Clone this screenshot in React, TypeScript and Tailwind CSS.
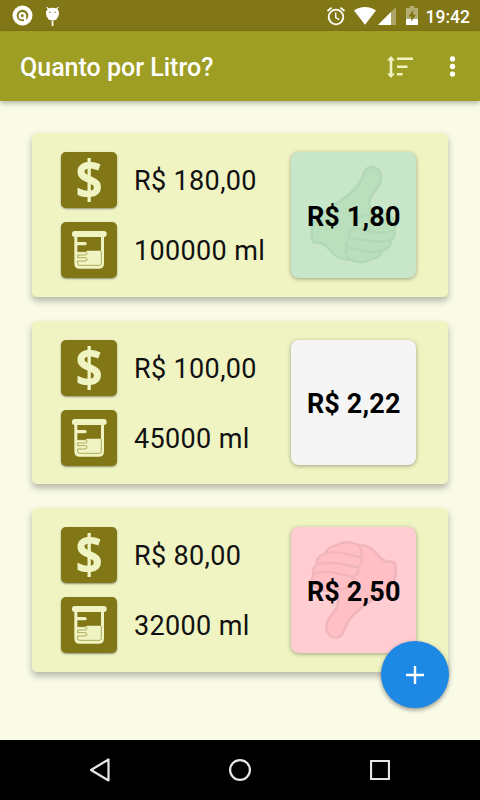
type Rating = 'best' | 'neutral' | 'worst';

interface Item {
    price: string;
    volume: string;
    perLiter: string;
    rating: Rating;
}

const items: Item[] = [
    { price: 'R$ 180,00', volume: '100000 ml', perLiter: 'R$ 1,80', rating: 'best' },
    { price: 'R$ 100,00', volume: '45000 ml', perLiter: 'R$ 2,22', rating: 'neutral' },
    { price: 'R$ 80,00', volume: '32000 ml', perLiter: 'R$ 2,50', rating: 'worst' },
];

const tileColors: Record<Rating, string> = {
    best: 'bg-[#c8e6c9]',
    neutral: 'bg-[#f5f5f5]',
    worst: 'bg-[#ffcdd2]',
};

function StatusBar() {
    return (
        <div className="flex h-[31px] shrink-0 items-center bg-[#827717] pl-3 pr-2.5 text-white">
            <svg className="h-[21px] w-[21px]" viewBox="0 0 21 21" fill="none">
                <circle cx="10.5" cy="10.5" r="10" fill="currentColor" />
                <circle cx="10.5" cy="10.5" r="5.8" fill="#827717" />
                <circle cx="10.3" cy="10.8" r="2.6" stroke="currentColor" strokeWidth="2.3" />
                <path d="M13.1 10v8" stroke="currentColor" strokeWidth="2.2" />
            </svg>
            <svg className="ml-3 h-5 w-[15px]" viewBox="0 0 15 20" fill="currentColor">
                <path d="M1.6 1.1l2 2.1M13.4 1.1l-2 2.1" stroke="currentColor" strokeWidth="1.1" />
                <path d="M3.2 2.6Q7.5.8 11.8 2.6L13.8 5.3 13.9 8 13.3 10.2 11.4 13.4Q7.5 15.6 3.6 13.4L1.7 10.2 1.1 8 1.2 5.3Z" />
                <path d="M6.7 15h1.7v5H6.7z" />
                <circle cx="4.9" cy="6.3" r=".7" fill="#827717" />
                <circle cx="10.1" cy="6.3" r=".7" fill="#827717" />
            </svg>

            <div className="ml-auto flex items-center">
                <svg className="h-5 w-[19px]" viewBox="0 0 19 20" fill="none" stroke="currentColor" strokeWidth="1.8">
                    <circle cx="9" cy="11" r="7.3" />
                    <path d="M.5 5l4-3.400M17.5 5l-4-3.400" />
                    <path d="M8.700 6.500v5l3.600 2.200" strokeWidth="1.4" />
                </svg>
                <svg className="ml-2 h-[18px] w-[22px]" viewBox="0 0 22 18" fill="currentColor">
                    <path d="M0 3.6Q4.5 0 11 0t11 3.6L11 17.7z" />
                </svg>
                <svg className="ml-0.5 h-[18px] w-[18px]" viewBox="0 0 18 18" fill="currentColor">
                    <path d="M0 18L18 0v18z" opacity=".35" />
                    <path d="M0 18L13 5v13z" />
                </svg>
                <svg className="ml-2.5 h-[19px] w-3" viewBox="0 0 12 19" fill="currentColor">
                    <path d="M0 2h3.7V0h4.6v2H12v10.8H0z" opacity=".4" />
                    <path d="M0 12.8h12V19H0z" />
                    <path d="M7.2 3.8L2.4 10.5h2.8v5l4.8-6.8H7.2z" fill="#827717" />
                </svg>
                <span className="ml-2 pt-0.5 text-[17.5px] leading-5 font-medium">19:42</span>
            </div>
        </div>
    );
}

function AppBar() {
    return (
        <header className="relative flex h-[70px] shrink-0 items-center bg-[#9e9d24] pl-5 pr-6 pt-0.5 text-white shadow-[0_2px_5px_rgba(0,0,0,0.3)]">
            <h1 className="pt-px text-[25px] leading-8 font-medium">Quanto por Litro?</h1>
            <button className="ml-auto text-[#f0f4c3]" aria-label="Ordenar">
                <svg className="h-[22px] w-[26px]" viewBox="0 0 26 22" fill="currentColor">
                    <path d="M4 0l4 4.5H5.3v13H8L4 22l-4-4.5h2.7v-13H0z" />
                    <path d="M10 1.5h16V4H10zM10 9.500h10.5V12H10zM10 17h5.5v2.500H10z" />
                </svg>
            </button>
            <button className="ml-[37px]" aria-label="Mais opções">
                <svg className="h-[22px] w-1.5" viewBox="0 0 6 22" fill="currentColor">
                    <circle cx="2.500" cy="2.9" r="2.7" />
                    <circle cx="2.500" cy="10.5" r="2.7" />
                    <circle cx="2.500" cy="18.1" r="2.7" />
                </svg>
            </button>
        </header>
    );
}

function BeakerIcon() {
    return (
        <svg className="h-14 w-14" viewBox="0 0 168 168" fill="none">
            <rect x="33" y="27" width="104" height="18" rx="8" fill="#f0f4c3" />
            <path d="M44.5 40v84q0 12 12 12h56q12 0 12-12V40" stroke="#f0f4c3" strokeWidth="9" />
            <path d="M47 89h26q3-3 7-3h42v44q0 4-4 4H52q-5 0-5-5z" fill="#f0f4c3" />
            <path d="M47 60h25a5 5 0 0 1 0 10H47z" fill="#f0f4c3" />
            <path
                d="M121 87v37q0 6-6 6H56q-6 0-6-6v-7h22q6 0 6-5t-6-5H50v-8h22q6 0 6-5t-6-5H50"
                stroke="#827717"
                strokeOpacity=".75"
                strokeWidth="2.4"
            />
        </svg>
    );
}

function IconTile({ children }: { children: React.ReactNode }) {
    return (
        <div className="flex h-[56px] w-[56px] shrink-0 items-center justify-center rounded-[5px] bg-[#827717] text-[#f0f4c3] shadow-[0_1px_2px_rgba(0,0,0,0.4)]">
            {children}
        </div>
    );
}

// The thumbs-down is a half turn of the thumbs-up
function ThumbIcon({ down }: { down?: boolean }) {
    return (
        <svg
            className={`absolute inset-0 h-full w-full ${down ? 'rotate-180' : ''}`}
            viewBox="0 0 376 376"
            fill={down ? '#ffbfc5' : '#b9dfbd'}
            stroke={down ? '#f0b6bc' : '#b3d8b7'}
            strokeWidth="7.5"
            strokeLinejoin="round"
            strokeLinecap="round"
        >
            <path d="M64 265C55 220 72 197 107 173L147 147C168 133 185 118 198 102C214 84 214 65 224 54C234 41 248 43 260 52C273 64 274 86 261 103C251 119 238 128 236 143C233 158 235 170 242 188C268 182 290 186 304 197C317 207 317 219 309 230C313 246 307 259 298 264C301 279 291 292 274 296C269 312 254 320 241 320C223 333 200 332 178 323C158 323 140 319 128 305C109 287 101 272 84 272Q67 274 64 265Z" />
            <path
                d="M242 188C216 187 204 197 189 204C181 213 183 222 194 227C173 233 170 244 177 256C163 264 163 277 167 286C158 299 164 311 178 323M194 227C220 230 260 252 306 236M177 256C213 262 252 276 298 264M167 286C195 287 229 310 274 296"
                fill="none"
            />
        </svg>
    );
}

function ItemCard({ item }: { item: Item }) {
    return (
        <li className="flex h-[163.5px] items-start justify-between rounded-[5px] bg-[#f0f4c3] pt-[19px] pr-8 pl-[29px] shadow-[0_4px_7px_rgba(0,0,0,0.28)]">
            <div className="flex flex-col gap-3.5 text-[27px] leading-8 tracking-[0.35px] text-[#111]">
                <div className="flex items-center gap-[17px]">
                    <IconTile>
                        <span className="-mt-0.5 scale-x-90 font-['Open_Sans'] text-[53px] leading-[52px] font-bold tracking-normal">$</span>
                    </IconTile>
                    <span className="pt-0.5">{item.price}</span>
                </div>
                <div className="flex items-center gap-[17px]">
                    <IconTile>
                        <BeakerIcon />
                    </IconTile>
                    <span className="pt-0.5">{item.volume}</span>
                </div>
            </div>
            <div
                className={`relative flex h-[125.5px] w-[125.5px] items-center justify-center rounded-lg shadow-[0_1px_4px_rgba(0,0,0,0.35)] ${tileColors[item.rating]}`}
            >
                {item.rating !== 'neutral' && <ThumbIcon down={item.rating === 'worst'} />}
                <span className="relative pt-1 pl-px text-[27px] leading-8 font-bold tracking-[0.15px] text-black">{item.perLiter}</span>
            </div>
        </li>
    );
}

function NavigationBar() {
    return (
        <nav className="flex h-[60px] shrink-0 items-center justify-between bg-black pr-[90px] pl-[89px] text-[#e6e6e6]">
            <svg className="h-6 w-[21px]" viewBox="0 0 21 24" fill="none" stroke="currentColor" strokeWidth="2.2" strokeLinejoin="round">
                <path d="M2 12L19.500 1.500v21z" />
            </svg>
            <svg className="h-[22px] w-[22px]" viewBox="0 0 22 22" fill="none" stroke="currentColor" strokeWidth="2.2">
                <circle cx="11" cy="11" r="9.900" />
            </svg>
            <svg className="h-5 w-5" viewBox="0 0 20 20" fill="none" stroke="currentColor" strokeWidth="2.2" strokeLinejoin="round">
                <path d="M1 1h18v18H1z" />
            </svg>
        </nav>
    );
}

export default function App() {
    return (
        <div className="relative flex h-[800px] w-[480px] flex-col overflow-hidden bg-[#f9fbe7] font-[Roboto,sans-serif]">
            <StatusBar />
            <AppBar />
            <main className="flex-1 px-8 pt-8">
                <ul className="flex flex-col gap-6">
                    {items.map((item) => (
                        <ItemCard key={item.volume} item={item} />
                    ))}
                </ul>
            </main>
            <NavigationBar />

            {/* Floating action button */}
            <button
                className="absolute right-[31px] bottom-[92px] flex h-[67px] w-[68px] items-center justify-center rounded-full bg-[#1e88e5] text-white shadow-[0_2px_4px_rgba(0,0,0,0.4)]"
                aria-label="Adicionar"
            >
                <svg className="h-[18px] w-[18px]" viewBox="0 0 18 18" fill="currentColor">
                    <path d="M7.800 0h2.400v7.800H18v2.400h-7.800V18H7.800v-7.800H0V7.800h7.800z" />
                </svg>
            </button>
        </div>
    );
}
